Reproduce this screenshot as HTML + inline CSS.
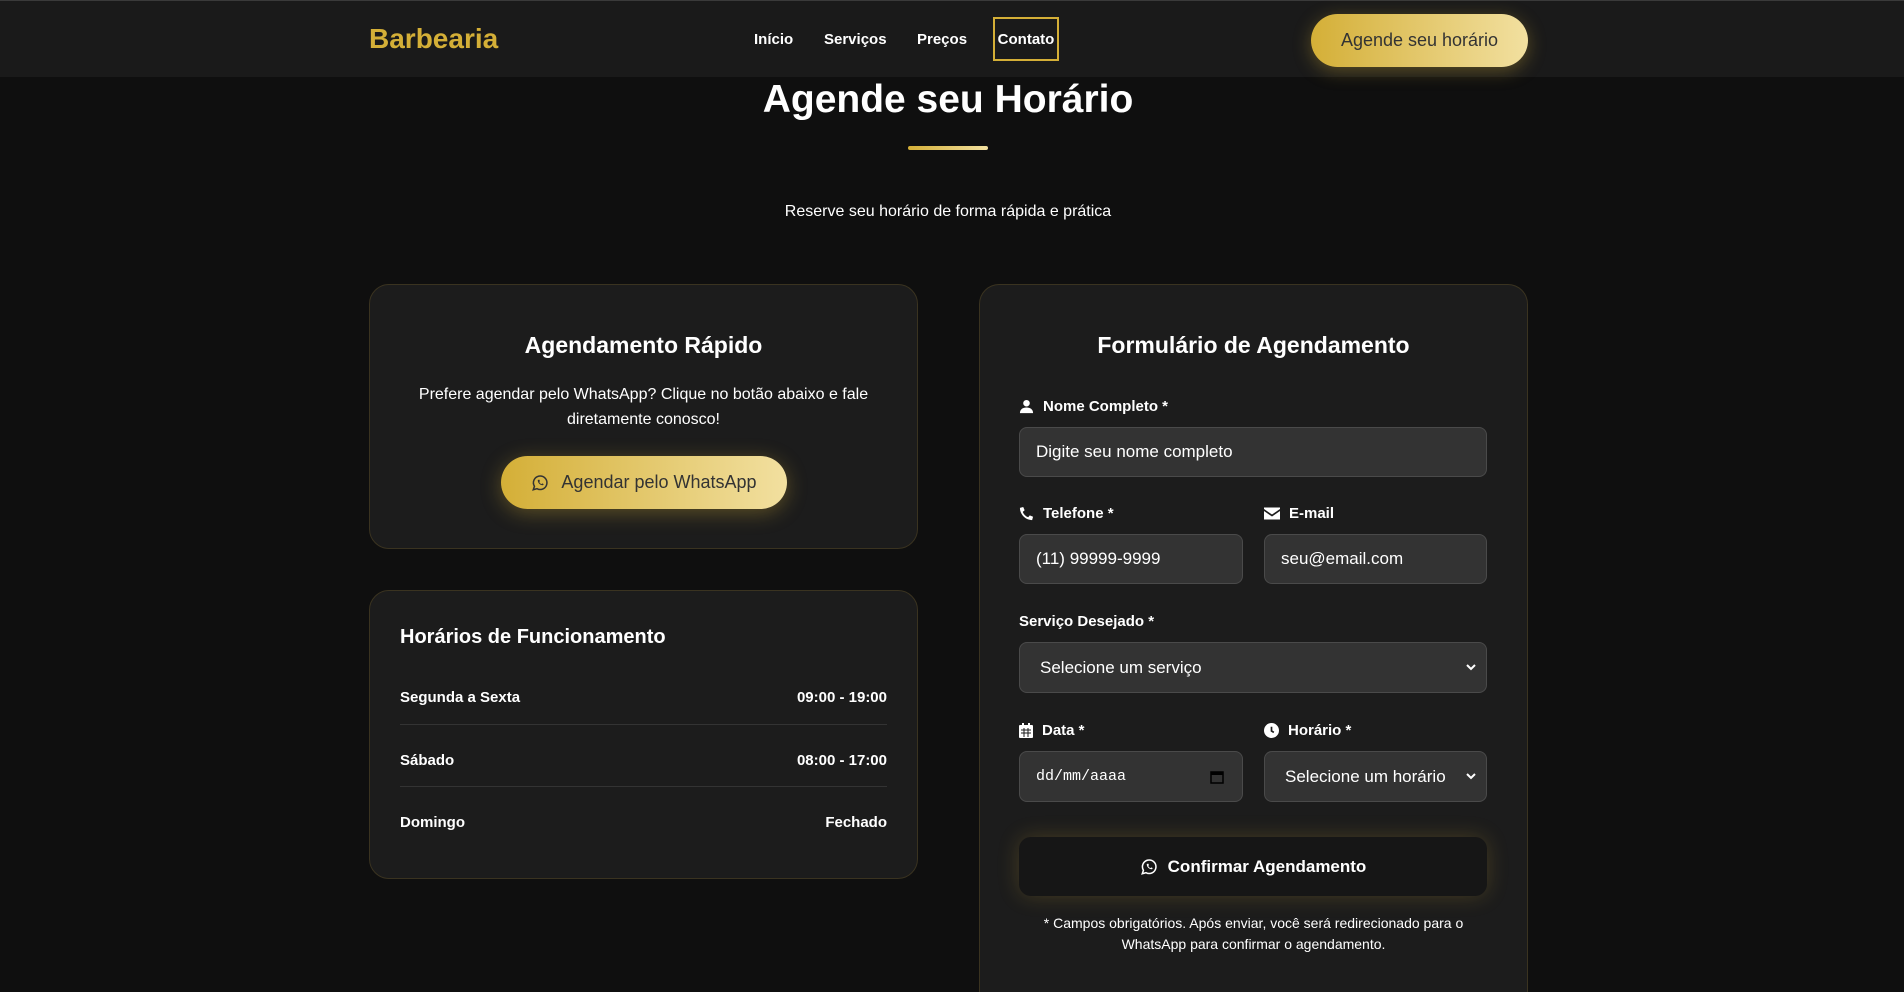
<!DOCTYPE html>
<html style="width:1904px;height:992px;overflow:hidden"><head><meta charset="utf-8"><style>
*{box-sizing:border-box;margin:0;padding:0}
body{width:1904px;height:992px;overflow:hidden;background:#0f0f0f;font-family:"Liberation Sans",Arial,sans-serif;color:#fff;position:relative}
.nav{position:absolute;left:0;top:0;width:1904px;height:77px;background:#1a1a1a;border-top:1px solid #3a3a3a}
.logo{position:absolute;left:369px;top:22px;font-size:28px;font-weight:bold;color:#d4af37}
.links a{position:absolute;top:30px;font-size:15px;font-weight:bold;color:#fff;text-decoration:none}
.contato{position:absolute;left:993px;top:16px;width:66px;height:44px;border:2px solid #d4af37;font-size:15px;font-weight:bold;display:flex;align-items:center;justify-content:center}
.btn{position:absolute;left:1311px;top:13px;width:217px;height:53px;border-radius:27px;background:linear-gradient(90deg,#d4af37,#f2e0a0);color:#333;font-size:18px;display:flex;align-items:center;justify-content:center;box-shadow:0 4px 18px rgba(212,175,55,.35)}
h1{position:absolute;left:0;width:1896px;text-align:center;top:78px;font-size:39px;font-weight:bold}
.line{position:absolute;left:908px;top:146px;width:80px;height:4px;border-radius:2px;background:linear-gradient(90deg,#d4af37,#f2e0a0)}
.sub{position:absolute;left:0;width:1896px;text-align:center;top:203px;font-size:16px}
.card{position:absolute;background:#1c1c1c;border:1px solid #3a3320;border-radius:20px}
.c1{left:369px;top:284px;width:549px;height:265px}
.c2{left:369px;top:590px;width:549px;height:289px}
.c3{left:979px;top:284px;width:549px;height:708px;border-bottom:none;border-radius:20px 20px 0 0}
.ct{position:absolute;left:0;width:100%;text-align:center;font-size:23px;font-weight:bold}
.p{position:absolute;left:0;width:100%;text-align:center;top:97px;font-size:16px;line-height:25px}
.wa{position:absolute;left:131px;top:171px;width:286px;height:53px;border-radius:27px;background:linear-gradient(90deg,#d4af37,#f2e0a0);color:#333;font-size:18px;display:flex;align-items:center;justify-content:center;gap:12px;box-shadow:0 4px 20px rgba(212,175,55,.35)}
.ht{position:absolute;left:30px;top:35px;font-size:20px;font-weight:bold}
.row{position:absolute;left:30px;width:487px;display:flex;justify-content:space-between;font-size:15px;font-weight:bold;height:20px}
.sep{position:absolute;left:30px;width:487px;height:1px;background:#333}
.lbl{position:absolute;font-size:15px;font-weight:bold;display:flex;align-items:center;gap:9px}
.in{position:absolute;background:#333;border:1px solid #4a4a4a;border-radius:8px;font-size:17px;color:#fff;display:flex;align-items:center;padding-left:16px}
.sel{justify-content:space-between;padding-left:20px;padding-right:10px}
.conf{position:absolute;left:39px;top:552px;width:468px;height:59px;border-radius:12px;background:#161616;font-size:17px;font-weight:bold;display:flex;align-items:center;justify-content:center;gap:10px;box-shadow:0 0 22px rgba(212,175,55,.22)}
.note{position:absolute;left:0;width:100%;text-align:center;top:628px;font-size:14px;line-height:21px}
</style></head><body>
<div class="nav">
<div class="logo">Barbearia</div>
<div class="links"><a style="left:754px">Início</a><a style="left:824px">Serviços</a><a style="left:917px">Preços</a></div>
<div class="contato">Contato</div>
<div class="btn">Agende seu horário</div>
</div>
<h1>Agende seu Horário</h1>
<div class="line"></div>
<div class="sub">Reserve seu horário de forma rápida e prática</div>

<div class="card c1">
<div class="ct" style="top:47px">Agendamento Rápido</div>
<div class="p">Prefere agendar pelo WhatsApp? Clique no botão abaixo e fale<br>diretamente conosco!</div>
<div class="wa"><svg width="18" height="18" viewBox="0 0 24 24" fill="none" stroke="#333" stroke-width="2"><path d="M3 21l1.6-4.6A9 9 0 1 1 8 19.6z"/><path d="M9 8c0 4 3 7 7 7l1-1.5-2-1-1 1c-1.5-.5-2.5-1.5-3-3l1-1-1-2z" fill="#333" stroke="none"/></svg>Agendar pelo WhatsApp</div>
</div>

<div class="card c2">
<div class="ht">Horários de Funcionamento</div>
<div class="row" style="top:98px"><span>Segunda a Sexta</span><span>09:00 - 19:00</span></div>
<div class="sep" style="top:133px"></div>
<div class="row" style="top:161px"><span>Sábado</span><span>08:00 - 17:00</span></div>
<div class="sep" style="top:195px"></div>
<div class="row" style="top:223px"><span>Domingo</span><span>Fechado</span></div>
</div>

<div class="card c3">
<div class="ct" style="top:47px">Formulário de Agendamento</div>
<div class="lbl" style="left:39px;top:113px"><svg width="15" height="15" viewBox="0 0 16 16" fill="#fff"><circle cx="8" cy="4.5" r="3.5"/><path d="M1 15c0-4 3-6 7-6s7 2 7 6z"/></svg>Nome Completo *</div>
<div class="in" style="left:39px;top:142px;width:468px;height:50px">Digite seu nome completo</div>
<div class="lbl" style="left:39px;top:220px"><svg width="15" height="15" viewBox="0 0 16 16" fill="#fff"><path d="M15 11.5l-3.5-1.5-1.7 2A10 10 0 0 1 4 6.2l2-1.7L4.5 1 1 2c0 7 6 13 13 13z"/></svg>Telefone *</div>
<div class="lbl" style="left:284px;top:220px"><svg width="16" height="13" viewBox="0 0 16 12" fill="#fff"><path d="M0 1.5V0h16v1.5L8 7z"/><path d="M0 3.5l8 5.5 8-5.5V12H0z"/></svg>E-mail</div>
<div class="in" style="left:39px;top:249px;width:224px;height:50px">(11) 99999-9999</div>
<div class="in" style="left:284px;top:249px;width:223px;height:50px">seu@email.com</div>
<div class="lbl" style="left:39px;top:328px">Serviço Desejado *</div>
<div class="in sel" style="left:39px;top:357px;width:468px;height:51px"><span>Selecione um serviço</span><svg width="10" height="7" viewBox="0 0 10 7"><path d="M1 1l4 4 4-4" stroke="#fff" stroke-width="2" fill="none"/></svg></div>
<div class="lbl" style="left:39px;top:437px"><svg width="14" height="15" viewBox="0 0 14 15" fill="#fff"><rect x="0" y="2" width="14" height="13" rx="1"/><rect x="3" y="0" width="2" height="3"/><rect x="9" y="0" width="2" height="3"/><path d="M2 7h10M2 10h10M5 5v9M9 5v9" stroke="#1c1c1c" stroke-width="1"/></svg>Data *</div>
<div class="lbl" style="left:284px;top:437px"><svg width="15" height="15" viewBox="0 0 16 16"><circle cx="8" cy="8" r="8" fill="#fff"/><path d="M8 4v4.5l2.5 1.5" stroke="#1c1c1c" stroke-width="1.8" fill="none"/></svg>Horário *</div>
<div class="in sel" style="left:39px;top:466px;width:224px;height:51px;font-family:'Liberation Mono',monospace;font-size:15px;padding-left:16px"><span>dd/mm/aaaa</span><svg width="14" height="14" viewBox="0 0 14 14" style="margin-right:8px"><rect x="1" y="2" width="12" height="11" fill="none" stroke="#000" stroke-width="1.5"/><rect x="1" y="2" width="12" height="3" fill="#000"/></svg></div>
<div class="in sel" style="left:284px;top:466px;width:223px;height:51px"><span>Selecione um horário</span><svg width="10" height="7" viewBox="0 0 10 7"><path d="M1 1l4 4 4-4" stroke="#fff" stroke-width="2" fill="none"/></svg></div>
<div class="conf"><svg width="18" height="18" viewBox="0 0 24 24" fill="none" stroke="#fff" stroke-width="2"><path d="M3 21l1.6-4.6A9 9 0 1 1 8 19.6z"/><path d="M9 8c0 4 3 7 7 7l1-1.5-2-1-1 1c-1.5-.5-2.5-1.5-3-3l1-1-1-2z" fill="#fff" stroke="none"/></svg>Confirmar Agendamento</div>
<div class="note">* Campos obrigatórios. Após enviar, você será redirecionado para o<br>WhatsApp para confirmar o agendamento.</div>
</div>
</body></html>
